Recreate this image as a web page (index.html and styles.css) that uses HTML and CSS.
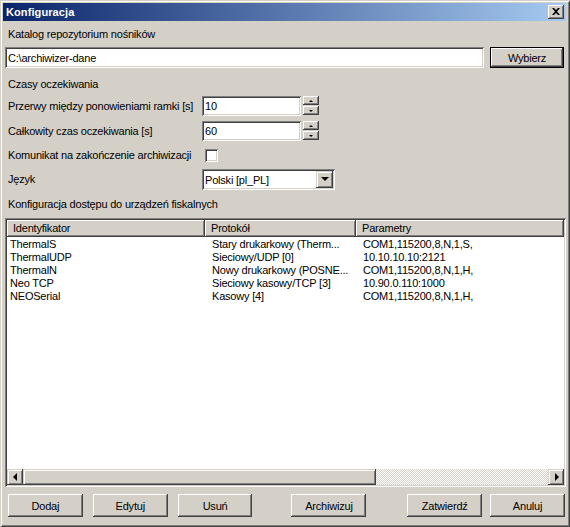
FILE: index.html
```html
<!DOCTYPE html>
<html lang="pl">
<head>
<meta charset="utf-8">
<title>Konfiguracja</title>
<link rel="stylesheet" href="styles.css">
</head>
<body>
<div class="window">
  <div class="titlebar">
    <span class="title">Konfiguracja</span>
    <span class="close"><svg width="8" height="7" viewBox="0 0 8 7"><path d="M0 0h2l2 2 2-2h2L5 3.5 8 7H6L4 5 2 7H0l3-3.5z" fill="#000"/></svg></span>
  </div>
  <div class="content">
    <div class="label first">Katalog repozytorium nośników</div>
    <div class="path-row">
      <div class="field path">C:\archiwizer-dane</div>
      <div class="btn default">Wybierz</div>
    </div>
    <div class="label section">Czasy oczekiwania</div>
    <div class="form">
      <div class="row">
        <span class="flabel">Przerwy między ponowieniami ramki [s]</span>
        <div class="field num">10</div>
        <div class="spin"><div class="sbtn"><span class="tri-up"></span></div><div class="sbtn"><span class="tri-down"></span></div></div>
      </div>
      <div class="row">
        <span class="flabel">Całkowity czas oczekiwania [s]</span>
        <div class="field num">60</div>
        <div class="spin"><div class="sbtn"><span class="tri-up"></span></div><div class="sbtn"><span class="tri-down"></span></div></div>
      </div>
      <div class="row">
        <span class="flabel">Komunikat na zakończenie archiwizacji</span>
        <div class="check-wrap"><div class="checkbox"></div></div>
      </div>
      <div class="row">
        <span class="flabel">Język</span>
        <div class="field select"><span class="sel-text">Polski [pl_PL]</span><span class="sel-btn"><span class="tri-big"></span></span></div>
      </div>
    </div>
    <div class="label section2">Konfiguracja dostępu do urządzeń fiskalnych</div>
    <div class="table">
      <div class="thead">
        <div class="th c1">Identyfikator</div>
        <div class="th c2">Protokół</div>
        <div class="th c3">Parametry</div>
      </div>
      <div class="tbody">
        <div class="tr"><span class="c1">ThermalS</span><span class="c2">Stary drukarkowy (Therm...</span><span class="c3">COM1,115200,8,N,1,S,</span></div>
        <div class="tr"><span class="c1">ThermalUDP</span><span class="c2">Sieciowy/UDP [0]</span><span class="c3">10.10.10.10:2121</span></div>
        <div class="tr"><span class="c1">ThermalN</span><span class="c2">Nowy drukarkowy (POSNE...</span><span class="c3">COM1,115200,8,N,1,H,</span></div>
        <div class="tr"><span class="c1">Neo TCP</span><span class="c2">Sieciowy kasowy/TCP [3]</span><span class="c3">10.90.0.110:1000</span></div>
        <div class="tr"><span class="c1">NEOSerial</span><span class="c2">Kasowy [4]</span><span class="c3">COM1,115200,8,N,1,H,</span></div>
      </div>
      <div class="hscroll">
        <div class="sb-btn"><span class="tri-left"></span></div>
        <div class="sb-thumb"></div>
        <div class="sb-track"></div>
        <div class="sb-btn"><span class="tri-right"></span></div>
      </div>
    </div>
    <div class="buttons">
      <div class="btn b-dodaj">Dodaj</div>
      <div class="btn b-edytuj">Edytuj</div>
      <div class="btn b-usun">Usuń</div>
      <div class="btn b-arch">Archiwizuj</div>
      <div class="btn b-zatw">Zatwierdź</div>
      <div class="btn b-anuluj">Anuluj</div>
    </div>
  </div>
</div>
</body>
</html>
```

FILE: styles.css
```css
* { box-sizing: border-box; }
html, body { margin: 0; padding: 0; background: #d4d0c8; }
body {
  font-family: "Liberation Sans", Arial, sans-serif;
  font-size: 11px;
  color: #000;
}
.window {
  width: 570px;
  height: 527px;
  background: #d4d0c8;
  padding: 3px 4px 4px 3px;
  box-shadow: inset 1px 1px #d4d0c8, inset -1px -1px #404040, inset 2px 2px #fff, inset -2px -2px #808080;
  display: flex;
  flex-direction: column;
}
.titlebar {
  height: 18px;
  background: linear-gradient(to right, #0a246a, #a6caf0);
  display: flex;
  align-items: center;
  justify-content: space-between;
  padding: 0 2px 0 3px;
}
.title {
  color: #fff;
  font-weight: bold;
  font-size: 11px;
  letter-spacing: 0.1px;
}
.close {
  width: 16px;
  height: 14px;
  background: #d4d0c8;
  box-shadow: inset -1px -1px #404040, inset 1px 1px #fff, inset -2px -2px #808080;
  display: flex;
  align-items: center;
  justify-content: center;
  padding-bottom: 1px;
}
.content {
  flex: 1;
  display: flex;
  flex-direction: column;
  padding: 0 1px 0 2px;
  letter-spacing: -0.2px;
}
.label {
  height: 13px;
  line-height: 13px;
  padding-left: 3px;
  white-space: nowrap;
}
.label.first { margin-top: 7px; }
.path-row {
  display: flex;
  gap: 6px;
  margin-top: 6px;
  height: 21px;
}
.field {
  background: #fff;
  box-shadow: inset 1px 1px #808080, inset -1px -1px #fff, inset 2px 2px #404040, inset -2px -2px #d4d0c8;
  height: 100%;
  display: flex;
  align-items: center;
  padding-left: 3px;
  white-space: nowrap;
}
.field.path { width: 479px; }
.btn {
  background: #d4d0c8;
  box-shadow: inset -1px -1px #404040, inset 1px 1px #fff, inset -2px -2px #808080;
  display: flex;
  align-items: center;
  justify-content: center;
  height: 23px;
  width: 75px;
  white-space: nowrap;
}
.btn.default {
  width: 74px;
  height: 21px;
  box-shadow: inset 0 0 0 1px #000, inset -2px -2px #404040, inset 2px 2px #fff, inset -3px -3px #808080;
}
.label.section { margin-top: 10px; }
.form {
  display: flex;
  flex-direction: column;
  margin-top: 5px;
  gap: 4px;
}
.row {
  display: flex;
  align-items: center;
  height: 20px;
}
.row:first-child { margin-bottom: 1px; }
.flabel {
  width: 197px;
  padding-left: 3px;
  white-space: nowrap;
}
.field.num { width: 99px; height: 20px; }
.spin {
  margin-left: 2px;
  display: flex;
  flex-direction: column;
  gap: 1px;
  height: 20px;
}
.sbtn {
  width: 16px;
  height: 9px;
  background: #d4d0c8;
  box-shadow: inset -1px -1px #404040, inset 1px 1px #fff, inset -2px -2px #808080;
  display: flex;
  align-items: center;
  justify-content: center;
}
.tri-up, .tri-down, .tri-big, .tri-left, .tri-right { width: 0; height: 0; display: block; }
.tri-up { border-left: 2px solid transparent; border-right: 2px solid transparent; border-bottom: 2px solid #000; }
.tri-down { border-left: 2px solid transparent; border-right: 2px solid transparent; border-top: 2px solid #000; }
.check-wrap { width: 20px; padding-left: 3px; display: flex; }
.checkbox {
  width: 13px;
  height: 13px;
  background: #fff;
  box-shadow: inset 1px 1px #808080, inset -1px -1px #fff, inset 2px 2px #404040, inset -2px -2px #d4d0c8;
}
.field.select {
  width: 133px;
  height: 21px;
  justify-content: space-between;
  padding-right: 2px;
}
.sel-text { padding-top: 1px; }
.sel-btn {
  width: 17px;
  height: 17px;
  background: #d4d0c8;
  box-shadow: inset -1px -1px #404040, inset 1px 1px #d4d0c8, inset 2px 2px #fff, inset -2px -2px #808080;
  display: flex;
  align-items: center;
  justify-content: center;
}
.tri-big { border-left: 4px solid transparent; border-right: 4px solid transparent; border-top: 4px solid #000; }
.label.section2 { margin-top: 9px; }
.table {
  margin-top: 7px;
  height: 269px;
  width: 561px;
  background: #fff;
  box-shadow: inset 1px 1px #808080, inset -1px -1px #fff, inset 2px 2px #404040, inset -2px -2px #d4d0c8;
  padding: 2px;
  display: flex;
  flex-direction: column;
}
.thead {
  display: flex;
  height: 17px;
  background: #d4d0c8;
}
.th {
  height: 17px;
  line-height: 16px;
  padding-left: 6px;
  background: #d4d0c8;
  box-shadow: inset -1px -1px #404040, inset 1px 1px #fff, inset -2px -2px #808080;
  white-space: nowrap;
}
.th.c1 { width: 198px; }
.th.c2 { width: 151px; }
.th.c3 { flex: 1; }
.tbody {
  flex: 1;
  padding-top: 1px;
}
.tr {
  display: flex;
  height: 13px;
  line-height: 13px;
  white-space: nowrap;
}
.tr .c1 { width: 198px; padding-left: 3px; }
.tr .c2 { width: 151px; padding-left: 7px; }
.tr .c3 { padding-left: 7px; }
.hscroll {
  display: flex;
  height: 16px;
}
.sb-btn {
  width: 16px;
  height: 16px;
  background: #d4d0c8;
  box-shadow: inset -1px -1px #404040, inset 1px 1px #d4d0c8, inset 2px 2px #fff, inset -2px -2px #808080;
  display: flex;
  align-items: center;
  justify-content: center;
}
.tri-left { border-top: 4px solid transparent; border-bottom: 4px solid transparent; border-right: 4px solid #000; margin-right: 1px; }
.tri-right { border-top: 4px solid transparent; border-bottom: 4px solid transparent; border-left: 4px solid #000; margin-left: 1px; }
.sb-thumb {
  width: 353px;
  background: #d4d0c8;
  box-shadow: inset -1px -1px #404040, inset 1px 1px #d4d0c8, inset 2px 2px #fff, inset -2px -2px #808080;
}
.sb-track {
  flex: 1;
  background: repeating-conic-gradient(#fff 0 25%, #d4d0c8 0 50%) 0 0 / 2px 2px;
}
.buttons {
  display: flex;
  margin-top: 7px;
  padding-left: 3px;
}
.b-edytuj { margin-left: 10px; }
.b-usun { margin-left: 10px; }
.b-arch { margin-left: 39px; }
.b-zatw { margin-left: 41px; }
.b-anuluj { margin-left: 8px; }
```
